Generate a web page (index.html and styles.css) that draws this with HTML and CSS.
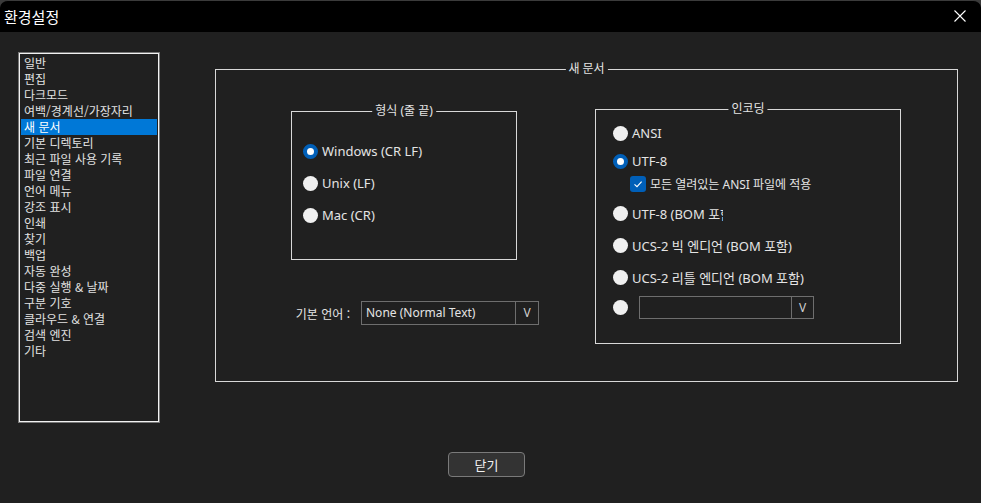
FILE: index.html
```html
<!DOCTYPE html>
<html lang="ko">
<head>
    <meta charset="UTF-8">
    <title>환경설정</title>
    <link rel="stylesheet" href="styles.css">
</head>
<body>
    <div class="window">
        <div class="titlebar">
            <span class="title">환경설정</span>
            <span class="close-x">
                <svg width="12" height="12" viewBox="0 0 12 12"><path d="M0.5 0.5 L11.5 11.5 M11.5 0.5 L0.5 11.5" stroke="#fff" stroke-width="1.1" fill="none"/></svg>
            </span>
        </div>

        <div class="main">
            <ul class="page-list">
                <li>일반</li>
                <li>편집</li>
                <li>다크모드</li>
                <li>여백/경계선/가장자리</li>
                <li class="selected">새 문서</li>
                <li>기본 디렉토리</li>
                <li>최근 파일 사용 기록</li>
                <li>파일 연결</li>
                <li>언어 메뉴</li>
                <li>강조 표시</li>
                <li>인쇄</li>
                <li>찾기</li>
                <li>백업</li>
                <li>자동 완성</li>
                <li>다중 실행 &amp; 날짜</li>
                <li>구분 기호</li>
                <li>클라우드 &amp; 연결</li>
                <li>검색 엔진</li>
                <li>기타</li>
            </ul>

            <div class="group outer-group">
                <span class="caption">새 문서</span>

                <div class="left-col">
                    <div class="group format-group">
                        <span class="caption">형식 (줄 끝)</span>
                        <div class="radio-row"><span class="radio checked"></span>Windows (CR LF)</div>
                        <div class="radio-row"><span class="radio"></span>Unix (LF)</div>
                        <div class="radio-row"><span class="radio"></span>Mac (CR)</div>
                    </div>

                    <div class="lang-row">
                        <span class="lang-label">기본 언어 :</span>
                        <div class="combo lang-combo">
                            <span class="combo-text">None (Normal Text)</span>
                            <span class="combo-arrow">V</span>
                        </div>
                    </div>
                </div>

                <div class="group encoding-group">
                    <span class="caption">인코딩</span>
                    <div class="radio-row enc-ansi"><span class="radio"></span>ANSI</div>
                    <div class="radio-row enc-utf8"><span class="radio checked"></span>UTF-8</div>
                    <div class="check-row">
                        <span class="checkbox">
                            <svg width="16" height="16" viewBox="0 0 16 16"><path d="M4.5 8.3 L7 10.7 L11.6 5.6" stroke="#fff" stroke-width="1.1" fill="none"/></svg>
                        </span>
                        모든 열려있는 ANSI 파일에 적용
                    </div>
                    <div class="radio-row enc-bom"><span class="radio"></span><span class="clipped">UTF-8 (BOM 포함)</span></div>
                    <div class="radio-row enc-ucs-big"><span class="radio"></span>UCS-2 빅 엔디언 (BOM 포함)</div>
                    <div class="radio-row enc-ucs-little"><span class="radio"></span>UCS-2 리틀 엔디언 (BOM 포함)</div>
                    <div class="radio-row enc-other">
                        <span class="radio"></span>
                        <div class="combo enc-combo">
                            <span class="combo-text"></span>
                            <span class="combo-arrow">V</span>
                        </div>
                    </div>
                </div>
            </div>
        </div>

        <div class="footer">
            <button class="close-btn">닫기</button>
        </div>
    </div>
</body>
</html>
```

FILE: styles.css
```css
html {
    background-color: #3b3b3b;
}
body {
    margin: 0;
    font-family: "Noto Sans", "Noto Sans CJK KR", sans-serif;
    font-size: 12px;
    color: #e4e4e4;
}
.window {
    width: 981px;
    height: 503px;
    box-sizing: border-box;
    background-color: #202020;
    border-top: 1px solid #3b3b3b;
    border-radius: 8px 8px 0 0;
    overflow: hidden;
}
.titlebar {
    height: 31px;
    background-color: #000;
    display: flex;
    align-items: center;
    justify-content: space-between;
    padding: 0 15px 0 4px;
}
.title {
    font-family: "Noto Sans CJK KR", sans-serif;
    font-size: 15px;
    color: #fff;
    margin-top: -1px;
}
.close-x {
    display: flex;
    margin-top: -1px;
}
.main {
    display: flex;
    align-items: flex-start;
    padding: 21px 0 0 19px;
    height: 389px;
}

/* daftar halaman kiri */
.page-list {
    list-style: none;
    margin: 0;
    padding: 1px 1px;
    width: 140px;
    height: 369px;
    box-sizing: border-box;
    border: 1px solid #f2f2f2;
    box-shadow: 0 0 0 1px #777;
    font-family: "Noto Sans CJK KR", sans-serif;
}
.page-list li {
    height: 16px;
    line-height: 16px;
    padding-left: 3px;
    white-space: nowrap;
    color: #e2e2e2;
}
.page-list li.selected {
    background-color: #0078d7;
    color: #fff;
}

/* group box */
.group {
    position: relative;
    border: 1px solid #d8d8d8;
    box-sizing: border-box;
}
.caption {
    position: absolute;
    top: -9px;
    left: 50%;
    transform: translateX(-50%);
    background-color: #202020;
    padding: 0 3px;
    line-height: 16px;
    white-space: nowrap;
    color: #e4e4e4;
}
.outer-group {
    margin: 16px 0 0 56px;
    width: 743px;
    height: 313px;
    display: flex;
    align-items: flex-start;
    padding: 39px 0 0 67px;
}
.left-col {
    width: 312px;
}
.format-group {
    margin: 2px 0 0 8px;
    width: 226px;
    height: 149px;
    padding: 31px 0 0 11px;
}
.radio-row {
    display: flex;
    align-items: center;
    height: 16px;
    white-space: nowrap;
    font-size: 13px;
}
.format-group .radio-row {
    margin-bottom: 16px;
}
.radio {
    width: 15px;
    height: 15px;
    border-radius: 50%;
    background-color: #f0f0f0;
    box-sizing: border-box;
    margin-right: 4px;
    flex-shrink: 0;
}
.radio.checked {
    background-color: #fff;
    border: 4px solid #005fb8;
}

.lang-row {
    display: flex;
    align-items: center;
    margin-top: 41px;
}
.lang-label {
    width: 78px;
    box-sizing: border-box;
    padding-right: 11px;
    text-align: right;
    font-family: "Noto Sans CJK KR", sans-serif;
}
.combo {
    display: flex;
    border: 1px solid #6e6e6e;
    box-sizing: border-box;
}
.combo-text {
    flex: 1;
    padding-left: 4px;
    white-space: nowrap;
}
.combo-arrow {
    border-left: 1px solid #6e6e6e;
    text-align: center;
    color: #cfcfcf;
}
.lang-combo {
    width: 178px;
    height: 24px;
    line-height: 22px;
}
.lang-combo .combo-arrow {
    width: 22px;
}

/* encoding */
.encoding-group {
    width: 306px;
    height: 235px;
    padding: 15px 0 0 17px;
}
.enc-utf8 {
    margin-top: 12px;
}
.check-row {
    display: flex;
    align-items: center;
    height: 16px;
    margin: 7px 0 0 17px;
    white-space: nowrap;
}
.checkbox {
    width: 16px;
    height: 16px;
    border-radius: 3px;
    background-color: #005fb8;
    margin-right: 4px;
    display: flex;
}
.enc-bom {
    margin-top: 13px;
}
.clipped {
    display: inline-block;
    width: 91px;
    overflow: hidden;
}
.enc-ucs-big,
.enc-ucs-little {
    margin-top: 16px;
}
.enc-other {
    margin-top: 11px;
    height: 23px;
}
.enc-combo {
    width: 175px;
    height: 23px;
    line-height: 21px;
    margin-left: 7px;
    font-size: 12px;
}
.enc-combo .combo-arrow {
    width: 21px;
}

.footer {
    display: flex;
    padding: 10px 0 0 448px;
}
.close-btn {
    width: 77px;
    height: 25px;
    background-color: #333;
    border: 1px solid #7a7a7a;
    border-radius: 4px;
    color: #f2f2f2;
    font-family: "Noto Sans CJK KR", sans-serif;
    font-size: 13px;
    padding: 0;
}
```
